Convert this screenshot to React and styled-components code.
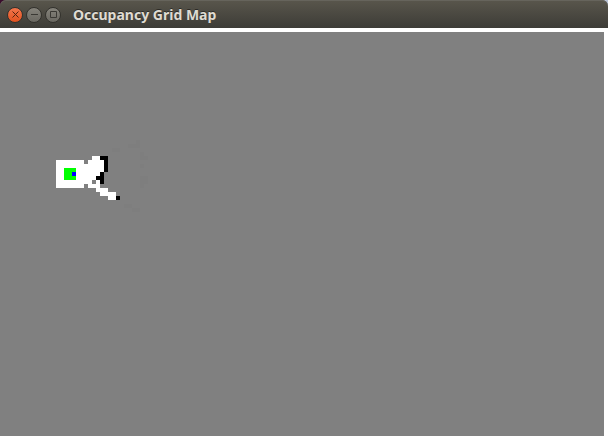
import React from "react";
import styled, { createGlobalStyle } from "styled-components";

const GlobalStyle = createGlobalStyle`
  * { box-sizing: border-box; }
  body { margin: 0; background: #fff; }
`;

const Window = styled.main`
  display: flex;
  flex-direction: column;
  min-height: 100vh;
  background: #fff;
`;

const Backdrop = styled.div`
  background: linear-gradient(90deg, #3a0d2c 50%, #b9c3d6 50%);
`;

const TitleBar = styled.header`
  display: flex;
  align-items: center;
  gap: 12px;
  height: 28px;
  padding: 2px 8px 0 7px;
  border-radius: 6px 6px 0 0;
  background: linear-gradient(#59564c, #3d3c37);
  box-shadow: inset 0 1px 0 #66645c;
`;

const Controls = styled.div`
  display: flex;
  gap: 3px;
`;

const ControlButton = styled.button`
  display: block;
  width: 16px;
  height: 16px;
  padding: 0;
  border: 1px solid #33322d;
  border-radius: 50%;
  color: ${(p) => (p.$close ? "#54240f" : "#3a3934")};
  background: ${(p) =>
    p.$close
      ? "linear-gradient(#f4764c, #e2521f)"
      : "linear-gradient(#85837b, #6a6861)"};

  svg { display: block; }
`;

const Title = styled.h1`
  margin: 0;
  color: #dfdbd2;
  font: 700 14px/20px "Noto Sans", "Open Sans", sans-serif;
  text-shadow: 0 -1px 0 #2c2b27;
`;

const MapArea = styled.section`
  flex: 1;
  margin: 4px 4px 0 0;
  background: #808080;
  overflow: hidden;
`;

const MapDrawing = styled.svg`
  display: block;
`;

const CELL = 4;
const COLORS = { W: "#fff", K: "#000", G: "#0f0", B: "#00f", F: "#7e7e7e" };

/* Runs of equal cells: [row, first column, length, kind]. */
const RUNS = [
  [27, 34, 1, "F"], [28, 32, 3, "F"], [29, 28, 2, "F"], [30, 35, 1, "F"],
  [31, 35, 2, "F"], [33, 35, 1, "F"], [36, 35, 2, "F"], [37, 35, 2, "F"],
  [38, 35, 1, "F"], [43, 31, 2, "F"], [44, 33, 2, "F"],
  [31, 23, 2, "W"], [31, 25, 2, "K"],
  [32, 14, 7, "W"], [32, 22, 4, "W"], [32, 26, 1, "K"],
  [33, 14, 12, "W"], [33, 26, 1, "K"],
  [34, 14, 12, "W"], [34, 16, 3, "G"], [34, 26, 1, "K"],
  [35, 14, 11, "W"], [35, 16, 2, "G"], [35, 18, 1, "B"], [35, 25, 1, "K"],
  [36, 14, 10, "W"], [36, 16, 3, "G"], [36, 24, 2, "K"],
  [37, 14, 9, "W"], [37, 24, 1, "W"], [37, 25, 1, "K"],
  [38, 14, 7, "W"], [38, 22, 3, "W"],
  [39, 24, 3, "W"],
  [40, 25, 4, "W"],
  [41, 27, 2, "W"], [41, 29, 1, "K"],
];

const ICONS = {
  Close: "M4.5 3.5l6 6M10.5 3.5l-6 6",
  Minimize: "M4 6.5h7",
  Maximize: "M4.5 3.5h6v6h-6z",
};

function WindowControl({ name }) {
  return (
    <ControlButton type="button" aria-label={name} $close={name === "Close"}>
      <svg width="14" height="14" viewBox="0 0 14 14" fill="none" stroke="currentColor">
        <path d={ICONS[name]} />
      </svg>
    </ControlButton>
  );
}

function GridMap() {
  return (
    <MapDrawing width="160" height="200" shapeRendering="crispEdges" role="img" aria-label="Occupancy grid">
      {RUNS.map(([row, column, length, kind]) => (
        <rect
          key={`${row}-${column}`}
          x={column * CELL}
          y={row * CELL}
          width={length * CELL}
          height={CELL}
          fill={COLORS[kind]}
        />
      ))}
    </MapDrawing>
  );
}

export default function App() {
  return (
    <Window>
      <GlobalStyle />
      <Backdrop>
        <TitleBar>
          <Controls>
            <WindowControl name="Close" />
            <WindowControl name="Minimize" />
            <WindowControl name="Maximize" />
          </Controls>
          <Title>Occupancy Grid Map</Title>
        </TitleBar>
      </Backdrop>
      <MapArea>
        <GridMap />
      </MapArea>
    </Window>
  );
}
